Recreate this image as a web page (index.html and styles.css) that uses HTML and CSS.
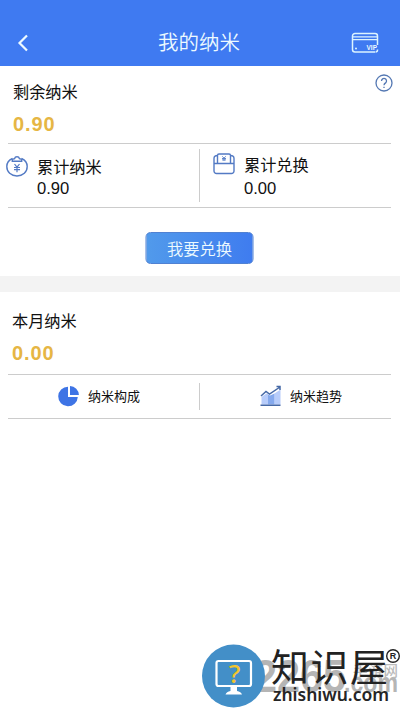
FILE: index.html
```html
<!DOCTYPE html>
<html lang="zh-CN">
<head>
<meta charset="utf-8">
<title>我的纳米</title>
<link rel="stylesheet" href="styles.css">
</head>
<body>
<header class="header">
  <svg class="back" width="12" height="18" viewBox="0 0 12 18"><path d="M10 1.500 2.500 9l7.500 7.500"/></svg>
  <h1 class="title">我的纳米</h1>
  <svg class="vip-card" width="28" height="22" viewBox="0 0 28 22">
    <path d="M24 20H4a2.500 2.500 0 0 1-2.500-2.500V4A2.500 2.500 0 0 1 4 1.500h20A2.500 2.500 0 0 1 26.500 4v9M26.500 17.500V18a2 2 0 0 1-2 2"/>
    <path class="stripe" d="M2 4.800h24M2 7.600h24"/>
    <circle cx="5" cy="16.500" r="1"/>
    <text x="15.500" y="18.300" textLength="10.500">VIP</text>
  </svg>
</header>
<main>
  <section class="balance">
    <div class="balance-head">
      <h2 class="label">剩余纳米</h2>
      <svg class="help" width="18" height="18" viewBox="0 0 18 18"><circle cx="9" cy="9" r="8"/><path d="M6.500 7a2.500 2.500 0 1 1 4.300 1.700C9.700 9.500 9 9.900 9 11.200M9 12.700v1.200"/></svg>
    </div>
    <p class="amount">0.90</p>
    <div class="totals">
      <div class="total">
        <svg class="icon purse" width="22" height="22" viewBox="0 0 22 22"><path d="M6.500 3.500C3 5 .8 7.800.8 11.500.8 17 5 21 11 21s10.200-4 10.200-9.500c0-3.700-2.200-6.500-5.700-8"/><path d="M6.300 6.200h9.400V4.300l-2.200-.6a2.600 2.600 0 0 0-5 0l-2.200.6z"/><path class="yen" d="m8.500 9 2.500 3.200L13.500 9M11 12.200v5M8 12.500h6M8 14.700h6"/></svg>
        <div><h3 class="total-label">累计纳米</h3><p class="total-value">0.90</p></div>
      </div>
      <div class="total exchanged">
        <svg class="icon" width="22" height="22" viewBox="0 0 22 22"><path d="M1 10.500h20V18a2.500 2.500 0 0 1-2.500 2.500h-15A2.500 2.500 0 0 1 1 18zM1 10.500V5.500Q1 2.500 4.500 2.500M21 10.500V5.500Q21 2.500 17.500 2.500"/><path d="M4.500 10.500V2.500A1.500 1.500 0 0 1 6 1h10a1.500 1.500 0 0 1 1.500 1.500v8"/><path class="thin" d="M9.300 3.300 11 5.200l1.700-1.900M11 5v3M9 5.500h4M9 6.900h4"/></svg>
        <div><h3 class="total-label">累计兑换</h3><p class="total-value">0.00</p></div>
      </div>
    </div>
    <button class="exchange">我要兑换</button>
  </section>
  <section class="month">
    <h2 class="label">本月纳米</h2>
    <p class="amount">0.00</p>
    <nav class="links">
      <a class="link">
        <svg width="22" height="22" viewBox="0 0 22 22"><path class="pie" d="M10 1.700V12h9.800A9.800 9.800 0 1 1 10 1.700zM12 .9A9.300 9.300 0 0 1 20.900 10H12z"/></svg>
        <span>纳米构成</span>
      </a>
      <a class="link trend">
        <svg width="22" height="22" viewBox="0 0 22 22"><path class="bar-light" d="M1.500 12 6.500 8.500 8 9v10.500H1.500zM14.500 8.500l6-4v15h-6z"/><path class="bar" d="M8 9.500l2 1 4.500-2v11H8z"/><path class="line" d="M1 11l5-4.500L9.500 9 20 2M16.500 1.500H20V5M.5 20.200h20"/></svg>
        <span>纳米趋势</span>
      </a>
    </nav>
  </section>
</main>
<aside class="watermark">
  <svg width="200" height="76" viewBox="0 0 200 76">
    <text class="mark-back" x="54" y="57" textLength="92" lengthAdjust="spacingAndGlyphs">2265</text>
    <text class="mark-domain" x="144" y="57" textLength="54" lengthAdjust="spacingAndGlyphs">.com</text>
    <text class="mark-small" x="153" y="41" textLength="45">手游网</text>
    <circle class="disc" cx="33.500" cy="41" r="31.500"/>
    <rect class="screen" x="16.500" y="26" width="34.500" height="25" rx="2"/>
    <path class="stand" d="M30.500 51h6.500v5q4 .5 5 3.500H25.500q1-3 5-3.500z"/>
    <text class="question" x="34.500" y="48">?</text>
    <text class="brand" x="71" y="46" textLength="117">知识屋</text>
    <text class="site" x="73" y="66" textLength="116">zhishiwu.com</text>
    <circle class="registered" cx="193" cy="21" r="6.300"/>
    <text class="registered-letter" x="193" y="24">R</text>
  </svg>
</aside>
</body>
</html>
```

FILE: styles.css
```css
* { box-sizing: border-box; }

body {
  margin: 0;
  min-height: 711px;
  position: relative;
  background: #fff;
  color: #111;
  font-family: "Noto Sans CJK SC", sans-serif;
}

h1, h2, h3, p { margin: 0; font-weight: 400; }
svg { display: block; flex: none; fill: none; }

.header {
  height: 66px;
  padding: 20px 21px 0 17px;
  display: grid;
  grid-template-columns: 60px 1fr 60px;
  align-items: center;
  background: #3f7af1;
  color: #edfaff;
}
.title { font-size: 20.500px; line-height: 30px; text-align: center; font-weight: 350; padding: 0 0 4px 2px; }
.back { stroke: #edfaff; stroke-width: 2.200; }
.vip-card { justify-self: end; stroke: #dcf4ff; stroke-width: 1.500; }
.vip-card .stripe { stroke-width: 1.300; }
.vip-card circle { fill: #dcf4ff; stroke: none; }
.vip-card text { fill: #edfaff; stroke: none; font: bold 6.500px "Liberation Sans", sans-serif; }

.label { font-size: 16.200px; line-height: 24px; }
.amount {
  font: 700 20px/24px "Liberation Sans", sans-serif;
  letter-spacing: 0.900px;
  color: #e6b644;
}

.balance { height: 210px; padding: 13px 8px 0; }
.balance-head { display: flex; justify-content: space-between; padding-left: 5px; }
.help { margin: -5px -1px 0 0; stroke: #5478b3; stroke-width: 1.300; }
.balance .amount { margin-top: 9px; padding-left: 5px; }

.totals {
  height: 65px;
  margin: 7px 1px 0 0;
  display: grid;
  grid-template-columns: 192px 1fr;
  border-top: 1px solid #ccc;
  border-bottom: 1px solid #ccc;
}
.total { display: flex; align-items: flex-start; gap: 9px; padding-top: 12px; margin-left: -2px; }
.total:first-child {
  background: linear-gradient(#ccc, #ccc) right center / 1px 53px no-repeat;
}
.exchanged { padding: 9px 0 0 15px; }
.icon { stroke: #537ac4; stroke-width: 1.400; }
.icon .thin { stroke-width: 0.900; }
.icon .yen { stroke-width: 1.200; }
.purse { margin-top: -1px; }
.total-label { font-size: 16.200px; line-height: 24px; margin-top: -2px; }
.exchanged .total-label { margin-top: -1px; }
.total-value { font: 16.600px/20px "Liberation Sans", sans-serif; margin-top: 1px; }
.exchanged .total-value { margin-top: 3px; }

.exchange {
  display: block;
  width: 108px;
  height: 32px;
  margin: 24px auto 0;
  padding: 0;
  transform: translateX(-0.500px);
  border: 1px solid #5081d2;
  border-radius: 5px;
  background: linear-gradient(90deg, #519aeb, #3f7cef);
  color: #edfaff;
  font: 350 16.300px/28px "Noto Sans CJK SC", sans-serif;
}

.month { border-top: 16px solid #f3f3f3; padding: 16px 8px 0; }
.month .label { padding-left: 4px; }
.month .amount { padding-left: 4px; margin-top: 9px; }
.links {
  height: 45px;
  margin: 9px 1px 0 0;
  display: grid;
  grid-template-columns: 192px 1fr;
  border-top: 1px solid #ccc;
  border-bottom: 1px solid #ccc;
}
.link { display: flex; align-items: center; gap: 8px; padding: 0 0 1px 50px; font-size: 13px; line-height: 20px; }
.link:first-child { background: linear-gradient(#ccc, #ccc) right center / 1px 27px no-repeat; }
.trend { padding-left: 60px; }
.pie { fill: #3e74e5; }
.bar-light { fill: #b7ccfa; }
.bar { fill: #85a9ed; }
.line { stroke: #4669a6; stroke-width: 1.500; }

.watermark { position: absolute; left: 200px; top: 635px; }
.mark-back { fill: #b5b5b5; font: bold 46px "Liberation Sans", sans-serif; }
.mark-domain { fill: #b5b5b5; font: bold 27px "Liberation Sans", sans-serif; }
.mark-small { fill: #bbb; font-size: 14.500px; font-weight: 500; }
.disc { fill: #438fc8; }
.screen { stroke: #fff; stroke-width: 2.200; }
.stand { fill: #fff; }
.question { fill: #f4c52c; font: 500 26px "Noto Sans", sans-serif; text-anchor: middle; }
.brand { fill: #222; font-size: 38px; font-weight: 400; }
.site { fill: #252525; font: 600 17.500px "Noto Sans", sans-serif; }
.registered { stroke: #222; stroke-width: 1.400; }
.registered-letter { fill: #222; font: bold 9px "Liberation Sans", sans-serif; text-anchor: middle; }
```
